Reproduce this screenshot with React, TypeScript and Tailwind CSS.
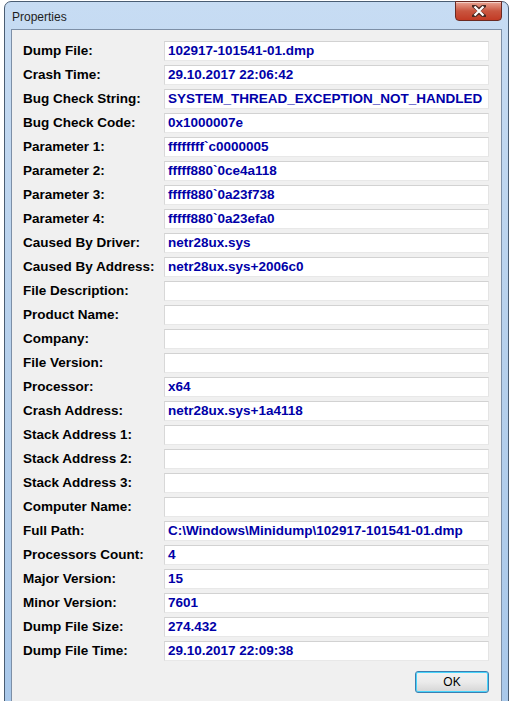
const rows: [string, string][] = [
  ["Dump File:", "102917-101541-01.dmp"],
  ["Crash Time:", "29.10.2017 22:06:42"],
  ["Bug Check String:", "SYSTEM_THREAD_EXCEPTION_NOT_HANDLED"],
  ["Bug Check Code:", "0x1000007e"],
  ["Parameter 1:", "ffffffff`c0000005"],
  ["Parameter 2:", "fffff880`0ce4a118"],
  ["Parameter 3:", "fffff880`0a23f738"],
  ["Parameter 4:", "fffff880`0a23efa0"],
  ["Caused By Driver:", "netr28ux.sys"],
  ["Caused By Address:", "netr28ux.sys+2006c0"],
  ["File Description:", ""],
  ["Product Name:", ""],
  ["Company:", ""],
  ["File Version:", ""],
  ["Processor:", "x64"],
  ["Crash Address:", "netr28ux.sys+1a4118"],
  ["Stack Address 1:", ""],
  ["Stack Address 2:", ""],
  ["Stack Address 3:", ""],
  ["Computer Name:", ""],
  ["Full Path:", "C:\\Windows\\Minidump\\102917-101541-01.dmp"],
  ["Processors Count:", "4"],
  ["Major Version:", "15"],
  ["Minor Version:", "7601"],
  ["Dump File Size:", "274.432"],
  ["Dump File Time:", "29.10.2017 22:09:38"],
];

function CloseButton() {
  return (
    <div className="absolute right-0 top-[-1px] flex h-[20px] w-[47px] items-center justify-center rounded-b-[4px] border border-[#6b2a22] bg-gradient-to-b from-[#e8a493] via-[#c9553f] to-[#c23a24] shadow-[inset_0_1px_0_rgba(255,255,255,0.5)]">
      <svg width="14" height="12" viewBox="0 0 14 12">
        <path
          d="M2 1 L7 5 L12 1 M2 11 L7 7 L12 11 M7 5 L7 7"
          stroke="#4a2a24"
          strokeWidth="4"
          strokeLinecap="square"
          fill="none"
        />
        <path
          d="M2.5 1.5 L11.5 10.5 M11.5 1.5 L2.5 10.5"
          stroke="#ffffff"
          strokeWidth="2.2"
          fill="none"
        />
      </svg>
    </div>
  );
}

export default function App() {
  return (
    <div className="relative h-[701px] w-[512px] overflow-hidden bg-white font-['Liberation_Sans',Arial,sans-serif]">
      {/* Window frame */}
      <div className="absolute left-[4px] top-[1px] flex h-[712px] w-[505px] flex-col rounded-t-[7px] border border-[#4a5d73] bg-gradient-to-b from-[#c7dcf3] via-[#b6d0ec] to-[#a9c8ea] px-[6px]">
        {/* Title bar */}
        <div className="relative h-[27px] shrink-0">
          <span className="absolute left-[1px] top-[6px] text-[12px] text-[#1e1e1e]">Properties</span>
          <CloseButton />
        </div>

        {/* Client area */}
        <div className="flex flex-1 flex-col border border-[#7d8fa6] bg-[#f0f0f0] pl-[11px] pr-[12px] pt-[11px]">
          <div className="flex flex-col gap-[4px]">
            {rows.map(([label, value]) => (
              <div key={label} className="flex h-[20px] items-center">
                <span className="w-[141px] whitespace-nowrap text-[13.5px] font-bold text-black">{label}</span>
                <div className="flex h-[20px] flex-1 items-center border border-t-[#d2d2d2] border-l-[#d8d8d8] border-r-[#e4e4e4] border-b-[#e8e8e8] bg-white pl-[3px]">
                  <span className="whitespace-nowrap text-[13.5px] font-bold text-[#0000a8]">{value}</span>
                </div>
              </div>
            ))}
          </div>

          <div className="mt-[10px] flex justify-end">
            <button className="h-[22px] w-[74px] rounded-[3px] border border-[#3c7fb1] bg-gradient-to-b from-[#f2f2f2] via-[#ebebeb] to-[#d5d5d5] text-[12px] text-black shadow-[inset_0_0_0_1px_#48d4fb]">
              OK
            </button>
          </div>
        </div>
      </div>
    </div>
  );
}
